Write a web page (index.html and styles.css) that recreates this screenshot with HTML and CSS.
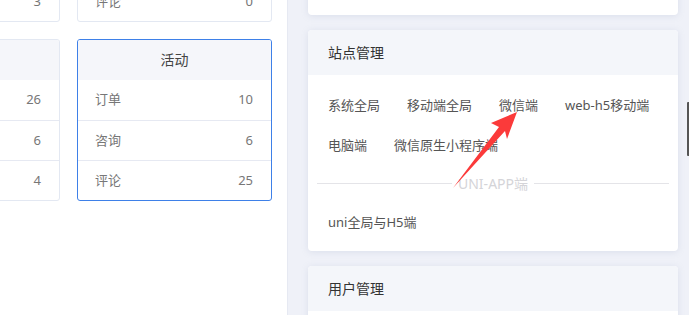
FILE: index.html
```html
<!DOCTYPE html>
<html lang="zh">
<head>
<meta charset="utf-8">
<link rel="stylesheet" href="styles.css">
</head>
<body>
<div class="page">
  <div class="left">
    <div class="stats">
      <div class="stat">
        <div class="stat-head">文章</div>
        <div class="stat-row"><span>订单</span><span>1</span></div>
        <div class="stat-row"><span>咨询</span><span>2</span></div>
        <div class="stat-row"><span>评论</span><span>3</span></div>
      </div>
      <div class="stat">
        <div class="stat-head">商品</div>
        <div class="stat-row"><span>订单</span><span>0</span></div>
        <div class="stat-row"><span>咨询</span><span>0</span></div>
        <div class="stat-row"><span>评论</span><span>0</span></div>
      </div>
      <div class="stat">
        <div class="stat-head">课程</div>
        <div class="stat-row"><span>订单</span><span>26</span></div>
        <div class="stat-row"><span>咨询</span><span>6</span></div>
        <div class="stat-row"><span>评论</span><span>4</span></div>
      </div>
      <div class="stat active">
        <div class="stat-head">活动</div>
        <div class="stat-row"><span>订单</span><span>10</span></div>
        <div class="stat-row"><span>咨询</span><span>6</span></div>
        <div class="stat-row"><span>评论</span><span>25</span></div>
      </div>
    </div>
  </div>
  <div class="right">
    <div class="panel panel-top"></div>
    <div class="panel">
      <div class="panel-head">站点管理</div>
      <div class="panel-body">
        <div class="links">
          <a class="link">系统全局</a>
          <a class="link">移动端全局</a>
          <a class="link">微信端</a>
          <a class="link">web-h5移动端</a>
          <a class="link">电脑端</a>
          <a class="link">微信原生小程序端</a>
        </div>
        <div class="divider"><span>UNI-APP端</span></div>
        <div class="links">
          <a class="link">uni全局与H5端</a>
        </div>
      </div>
    </div>
    <div class="panel">
      <div class="panel-head">用户管理</div>
      <div class="panel-body"></div>
    </div>
  </div>
  <svg class="arrow" width="689" height="315" viewBox="0 0 689 315">
    <polygon points="517,112 491,123 499,127 453,188 505,131 507,139" fill="#fb3a3a"/>
  </svg>
  <div class="scroll-thumb"></div>
</div>
</body>
</html>
```
FILE: styles.css
```css
* { box-sizing: border-box; }
html, body { margin: 0; padding: 0; }
body {
  width: 689px;
  height: 315px;
  overflow: hidden;
  font-family: "Noto Sans", "Noto Sans CJK SC", sans-serif;
  font-size: 13px;
  color: #606266;
  background: #eff1f8;
}
.page {
  position: relative;
  display: flex;
  width: 689px;
  height: 315px;
  overflow: hidden;
}
.left {
  width: 288px;
  flex: none;
  background: #fff;
  border-right: 1px solid #e6e9f2;
  overflow: hidden;
}
.stats {
  display: grid;
  grid-template-columns: 195px 195px;
  column-gap: 17px;
  row-gap: 17px;
  margin-left: -135px;
  margin-top: -140px;
}
.stat {
  border: 1px solid #e3e8f2;
  border-radius: 3px;
  background: #fff;
  overflow: hidden;
}
.stat.active { border-color: #3e80e8; }
.stat-head {
  height: 40px;
  line-height: 39px;
  text-align: center;
  background: #f5f6fa;
  color: #444;
  font-size: 14px;
}
.stat-row {
  display: flex;
  justify-content: space-between;
  height: 40px;
  line-height: 39px;
  padding: 0 18px 0 17px;
  border-top: 1px solid #e6e9f2;
  color: #777;
  font-size: 13px;
}
.stat-head + .stat-row { border-top: none; }
.right {
  flex: 1;
  padding: 0 11px 0 20px;
  display: flex;
  flex-direction: column;
  gap: 15px;
}
.panel {
  background: #fff;
  border-radius: 4px;
  box-shadow: 0 1px 6px rgba(160, 170, 200, 0.25);
  overflow: hidden;
  flex: none;
}
.panel-top {
  height: 100px;
  margin-top: -85px;
}
.panel-head {
  height: 45px;
  line-height: 45px;
  padding-left: 20px;
  background: #f4f6fa;
  color: #333;
  font-size: 14px;
}
.panel-body {
  padding: 10px 10px 9px 10px;
}
.links {
  display: flex;
  flex-wrap: wrap;
  column-gap: 27px;
  padding-left: 10px;
}
.link {
  height: 40px;
  line-height: 40px;
  color: #555;
  font-size: 13px;
  text-decoration: none;
  white-space: nowrap;
}
.divider {
  display: flex;
  align-items: center;
  margin: 10px -1px 11px -1px;
  height: 16px;
  color: #d4d4d8;
  font-size: 14px;
}
.divider::before, .divider::after {
  content: "";
  flex: 1;
  height: 1px;
  background: #e4e4e8;
}
.divider span { padding: 0 6px; }
.arrow {
  position: absolute;
  left: 0;
  top: 0;
  pointer-events: none;
}
.scroll-thumb {
  position: absolute;
  right: 0;
  top: 102px;
  width: 2px;
  height: 54px;
  background: #555;
  border-radius: 1px 0 0 1px;
}
```
